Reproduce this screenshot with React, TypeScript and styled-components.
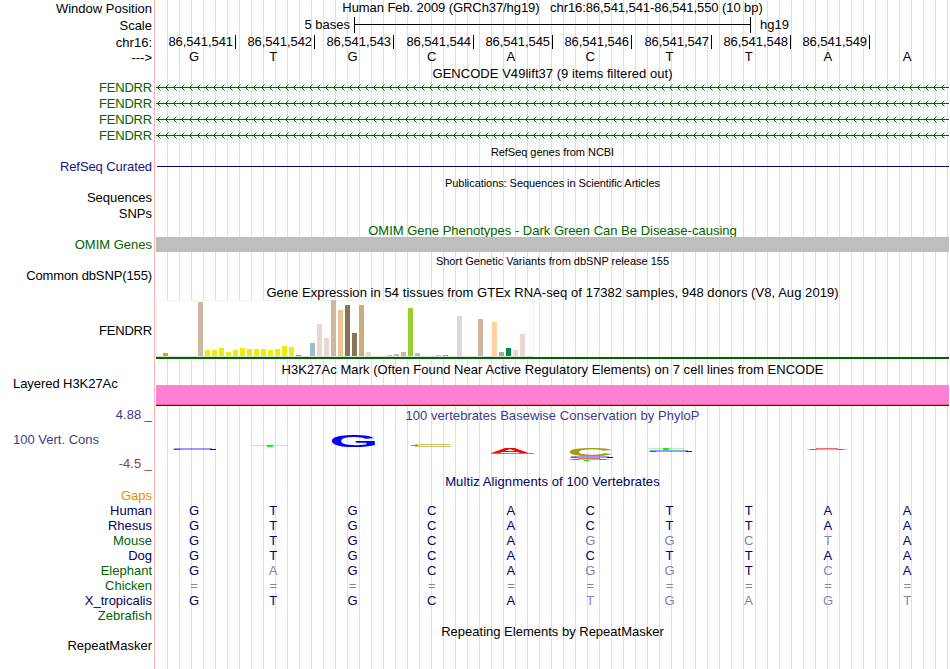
import React from "react";
import styled, { createGlobalStyle } from "styled-components";

const Global = createGlobalStyle`
  body { margin: 0; background: #fff; }
  * { box-sizing: border-box; }
`;

const NAVY = "#000064";
const GREEN = "#006400";
const PHYLO = "#3c3c8c";

const Browser = styled.main`
  width: 949px;
  height: 669px;
  overflow: hidden;
  font: 13px/16px "Liberation Sans", Arial, sans-serif;
  color: #000;
  white-space: pre;
  background:
    linear-gradient(#ffb4b4, #ffb4b4) 154px 0 / 1px 100% no-repeat,
    repeating-linear-gradient(to right, #dcdcf5 0 1px, transparent 1px 12px) 167px 0 / 782px 100% no-repeat;
`;

const Track = styled.section<{ $h: number }>`
  display: grid;
  grid-template-columns: 152px 793px;
  column-gap: 4px;
  height: ${(p) => p.$h}px;
`;

const Label = styled.div<{ $top?: number; $color?: string; $left?: boolean; $ls?: number }>`
  margin-top: ${(p) => p.$top ?? 0}px;
  padding-left: ${(p) => (p.$left ? 13 : 0)}px;
  text-align: ${(p) => (p.$left ? "left" : "right")};
  color: ${(p) => p.$color ?? "#000"};
  letter-spacing: ${(p) => p.$ls ?? 0}px;
  height: 16px;
`;

const Title = styled.h2<{ $h: number; $top?: number; $color?: string; $small?: boolean; $inner?: boolean; $ls?: number }>`
  margin: 0 0 0 ${(p) => (p.$inner ? 0 : 156)}px;
  width: 793px;
  height: ${(p) => p.$h}px;
  padding-top: ${(p) => p.$top ?? 0}px;
  font-size: ${(p) => (p.$small ? 11 : 13)}px;
  font-weight: 400;
  line-height: 16px;
  text-align: center;
  color: ${(p) => p.$color ?? "#000"};
  letter-spacing: ${(p) => p.$ls ?? 0}px;
`;

const ScaleRow = styled.div`
  display: grid;
  grid-template-columns: 194px 397px 1fr;
  column-gap: 4px;
  height: 18px;
  line-height: 16px;
  & > :first-child { text-align: right; }
  & > :last-child { padding-left: 5px; }
`;

const ScaleBar = styled.div`
  height: 16px;
  border: solid #000;
  border-width: 0 1px;
  background: linear-gradient(#000, #000) 0 7px / 100% 1px no-repeat;
`;

const Ruler = styled.div`
  display: flex;
  height: 14px;
`;

const Position = styled.span<{ $w: number }>`
  width: ${(p) => p.$w}px;
  height: 14px;
  padding-right: 2px;
  border-right: 1px solid #000;
  text-align: right;
  line-height: 14px;
  letter-spacing: -0.05px;
`;

const Bases = styled.div`
  display: grid;
  grid-template-columns: repeat(10, 79.25px);
  margin-left: -1.7px;
  text-align: center;
`;

const Base = styled.span<{ $faded?: boolean; $plain?: boolean }>`
  color: ${(p) => (p.$plain ? "#000" : p.$faded ? "#8282b4" : NAVY)};
`;

const CuratedLine = styled.div`
  height: 1px;
  margin: 7px 0 0 1px;
  background: #00007d;
`;

const OmimBar = styled.div`
  height: 15px;
  background: #bebebe;
`;

const HistoneBar = styled.div`
  height: 21px;
  margin-top: 7px;
  background: #ff80d5;
  border-bottom: 1px solid #1e1e50;
  box-shadow: inset 0 -1px #f06478;
`;

const Expression = styled.div`
  height: 59px;
  border-bottom: 2px solid ${GREEN};
`;

const Chart = styled.div`
  display: flex;
  align-items: flex-end;
  gap: 2px;
  width: 378px;
  height: 57px;
  background: #fff;
  border-bottom: 1px solid #dcdcdc;
  box-shadow: inset 1px 1px #f2f2f2, inset -1px 0 #f2f2f2;
`;

const Bar = styled.i<{ $h: number; $c: string }>`
  flex: 0 0 5px;
  height: ${(p) => p.$h}px;
  background: ${(p) => p.$c};
`;

const Drawing = styled.svg`
  display: block;
`;

const ScoreLabels = styled.div`
  display: flex;
  flex-direction: column;
  justify-content: space-between;
  height: 66px;
`;

const sequence = "GTGCACTTAA";
const tickWidths = [80, 79, 79, 80, 79, 79, 80, 79, 79];

const TAN = "#cdb79e";
const YEL = "#eeee00";
const ROSE = "#eed5d2";
const expression: Record<number, [number, string]> = {
  1: [3, "#ee9a00"], 6: [54, TAN], 7: [6, YEL], 8: [6, YEL], 9: [8, YEL], 10: [4, YEL],
  11: [6, YEL], 12: [8, YEL], 13: [7, YEL], 14: [7, YEL], 15: [7, YEL], 16: [6, YEL],
  17: [7, YEL], 18: [10, YEL], 19: [9, YEL], 20: [1, "#00cdcd"], 22: [13, "#9ac0cd"],
  23: [32, ROSE], 24: [18, ROSE], 25: [56, TAN], 26: [46, "#eec591"], 27: [51, "#8b7355"],
  28: [23, "#8b7355"], 29: [51, "#cdaa7d"], 30: [4, ROSE], 33: [1, TAN], 34: [2, TAN],
  35: [4, TAN], 36: [48, "#9acd32"], 37: [3, TAN], 40: [1, "#ffb6c1"], 41: [1, "#cd9b1d"],
  43: [40, "#d9d9d9"], 46: [37, TAN], 48: [34, "#ffd39b"], 49: [4, "#a6a6a6"],
  50: [8, "#008b45"], 51: [6, ROSE], 52: [22, ROSE],
};

// Ink extents of each letter at font-size 100: left, right, above and below the baseline.
const glyphs: Record<string, [number, number, number, number]> = {
  G: [4.3, 72, 70, 1],
  C: [4.6, 68, 70, 1],
  A: [0, 72, 69, 0],
};
const inks: Record<string, string> = { G: "#0000ff", C: "#a0a000", A: "#ff0000" };

// letter, x, y, width, height
const logo: [string, number, number, number, number][] = [
  ["G", 176, 12.7, 43, 12.3],
  ["A", 334, 26, 40, 5],
  ["C", 414, 26, 41, 8],
];

// Scores near zero flatten a letter to one or two pixel rows.
function FlatG({ x, y }: { x: number; y: number }) {
  return (
    <g fill="#0000ff">
      <rect x={x + 1} y={y} width="38" height="1" opacity="0.4" />
      <rect x={x} y={y + 1} width="43" height="1" opacity="0.4" />
      <rect x={x + 1} y={y + 1} width="6" height="1" opacity="0.5" />
      <rect x={x + 37} y={y + 1} width="6" height="1" />
    </g>
  );
}

function FlatT({ x, y, stem }: { x: number; y: number; stem: number }) {
  return (
    <g fill="#00ff00">
      <rect x={x} y={y} width="37" height="1" opacity="0.35" />
      <rect x={stem} y={y} width="6" height="2" />
    </g>
  );
}

function FlatA({ x, y }: { x: number; y: number }) {
  return (
    <g fill="#ff0000">
      <rect x={x + 9} y={y} width="22" height="1" opacity="0.6" />
      <rect x={x} y={y + 1} width="40" height="1" opacity="0.35" />
      <rect x={x + 3} y={y + 1} width="7" height="1" opacity="0.6" />
      <rect x={x + 30} y={y + 1} width="7" height="1" opacity="0.6" />
    </g>
  );
}

function Logo() {
  return (
    <Drawing width="793" height="44" fontFamily="Liberation Sans" fontWeight="700" fontSize="100">
      {logo.map(([ch, x, y, w, h], i) => {
        const [l, r, top, bottom] = glyphs[ch];
        const sx = w / (r - l);
        const sy = h / (top + bottom);
        return (
          <text key={i} fill={inks[ch]} transform={`matrix(${sx} 0 0 ${sy} ${x - l * sx} ${y + top * sy})`}>
            {ch}
          </text>
        );
      })}
      <FlatG x={17} y={26} />
      <FlatT x={95} y={23} stem={111} />
      <g fill="#a0a000">
        <rect x="259" y="22" width="35" height="1" opacity="0.6" />
        <rect x="255" y="23" width="7" height="1" />
        <rect x="259" y="24" width="36" height="1" opacity="0.6" />
      </g>
      <rect x="335" y="31" width="43" height="1" fill="#0000ff" opacity="0.5" />
      <FlatG x={414} y={34} />
      <FlatA x={413} y={36} />
      <rect x="428" y="38" width="6" height="1" fill="#00ff00" />
      <FlatT x={492} y={26} stem={507} />
      <FlatG x={493} y={28} />
      <FlatA x={651} y={26} />
    </Drawing>
  );
}

function Transcript() {
  return (
    <Track $h={16}>
      <Label $color={GREEN} $ls={-0.2}>FENDRR</Label>
      <Drawing width="793" height="16">
        <rect y="7" width="793" height="1" fill={GREEN} />
        {Array.from({ length: 99 }, (_, i) => (
          <path key={i} d={`M${i * 8 + 4.4} 4.6l-2.9 2.9l2.9 2.9`} fill="none" stroke={GREEN} />
        ))}
      </Drawing>
    </Track>
  );
}

// Lower-case bases differ from the human sequence.
const species: [string, string, string][] = [
  ["Gaps", "", "#e68c00"],
  ["Human", "GTGCACTTAA", NAVY],
  ["Rhesus", "GTGCACTTAA", NAVY],
  ["Mouse", "GTGCAggctA", GREEN],
  ["Dog", "GTGCACTTAA", NAVY],
  ["Elephant", "GaGCAggTcA", GREEN],
  ["Chicken", "==========", GREEN],
  ["X_tropicalis", "GTGCAtgagt", NAVY],
  ["Zebrafish", "", GREEN],
];

export default function App() {
  return (
    <>
      <Global />
      <Browser>
        <Track $h={17}>
          <Label $top={1}>Window Position</Label>
          <Title $h={16} $inner $ls={-0.08}>{"Human Feb. 2009 (GRCh37/hg19)   chr16:86,541,541-86,541,550 (10 bp)"}</Title>
        </Track>
        <Track $h={18}>
          <Label $top={1}>Scale</Label>
          <ScaleRow>
            <span>5 bases</span>
            <ScaleBar />
            <span>hg19</span>
          </ScaleRow>
        </Track>
        <Track $h={14}>
          <Label>chr16:</Label>
          <Ruler>
            {tickWidths.map((w, i) => (
              <Position key={i} $w={w}>{`86,541,54${i + 1}`}</Position>
            ))}
          </Ruler>
        </Track>
        <Track $h={17}>
          <Label $top={1}>{"--->"}</Label>
          <Bases>
            {[...sequence].map((b, i) => <Base key={i} $plain>{b}</Base>)}
          </Bases>
        </Track>
        <Title $h={14} $ls={0.04}>GENCODE V49lift37 (9 items filtered out)</Title>
        {[0, 1, 2, 3].map((i) => <Transcript key={i} />)}
        <Title $h={15} $small $ls={-0.04}>RefSeq genes from NCBI</Title>
        <Track $h={16}>
          <Label $color="#14147d" $ls={-0.08}>RefSeq Curated</Label>
          <CuratedLine />
        </Track>
        <Title $h={15} $small $ls={-0.06}>Publications: Sequences in Scientific Articles</Title>
        <Track $h={16}><Label>Sequences</Label></Track>
        <Track $h={16}><Label>SNPs</Label></Track>
        <Title $h={15} $top={1} $color={GREEN}>OMIM Gene Phenotypes - Dark Green Can Be Disease-causing</Title>
        <Track $h={16}>
          <Label $color={GREEN}>OMIM Genes</Label>
          <OmimBar />
        </Track>
        <Title $h={15} $small>Short Genetic Variants from dbSNP release 155</Title>
        <Track $h={16}><Label $ls={-0.12}>Common dbSNP(155)</Label></Track>
        <Title $h={16} $top={1} $ls={0.055}>Gene Expression in 54 tissues from GTEx RNA-seq of 17382 samples, 948 donors (V8, Aug 2019)</Title>
        <Track $h={61}>
          <Label $top={23} $ls={-0.2}>FENDRR</Label>
          <Expression>
            <Chart>
              {Array.from({ length: 54 }, (_, i) => (
                <Bar key={i} $h={expression[i]?.[0] ?? 0} $c={expression[i]?.[1] ?? "#fff"} />
              ))}
            </Chart>
          </Expression>
        </Track>
        <Title $h={17} $top={1} $ls={0.05}>H3K27Ac Mark (Often Found Near Active Regulatory Elements) on 7 cell lines from ENCODE</Title>
        <Track $h={28}>
          <Label $left $top={-2} $ls={-0.06}>Layered H3K27Ac</Label>
          <HistoneBar />
        </Track>
        <Track $h={67}>
          <ScoreLabels>
            <Label $top={1} $color={PHYLO}>4.88 _</Label>
            <Label $top={1} $left $color={PHYLO}>100 Vert. Cons</Label>
            <Label $top={1} $color="#8c3c3c">-4.5 _</Label>
          </ScoreLabels>
          <div>
            <Title $h={16} $top={2} $inner $color={PHYLO} $ls={0.04}>100 vertebrates Basewise Conservation by PhyloP</Title>
            <Logo />
          </div>
        </Track>
        <Title $h={15} $top={1} $color={NAVY} $ls={0.1}>Multiz Alignments of 100 Vertebrates</Title>
        {species.map(([name, bases, color]) => (
          <Track key={name} $h={15}>
            <Label $color={color}>{name}</Label>
            <Bases>
              {[...bases].map((b, i) => (
                <Base key={i} $faded={b === "=" || b !== b.toUpperCase()}>{b.toUpperCase()}</Base>
              ))}
            </Bases>
          </Track>
        ))}
        <Title $h={15} $top={1}>Repeating Elements by RepeatMasker</Title>
        <Track $h={16}><Label>RepeatMasker</Label></Track>
      </Browser>
    </>
  );
}
